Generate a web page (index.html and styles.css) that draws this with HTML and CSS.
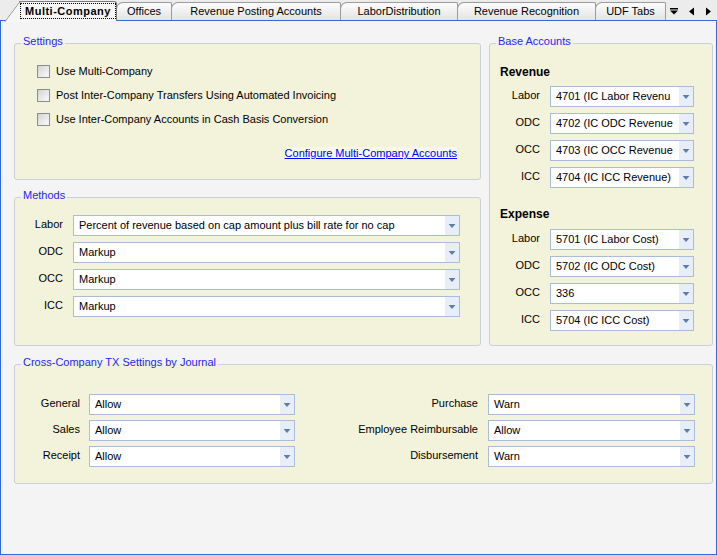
FILE: index.html
```html
<!DOCTYPE html>
<html>
<head>
<meta charset="utf-8">
<title>Multi-Company</title>
<link rel="stylesheet" href="styles.css">
</head>
<body>
<div class="window">
  <div class="tabstrip">
    <div class="tabs">
      <div class="tab active"><span class="focus">Multi-Company</span></div>
      <div class="tab t-offices">Offices</div>
      <div class="tab t-rpa">Revenue Posting Accounts</div>
      <div class="tab t-ld">LaborDistribution</div>
      <div class="tab t-rr">Revenue Recognition</div>
      <div class="tab t-udf">UDF Tabs</div>
    </div>
    <div class="tabnav">
      <svg class="navicons" width="46" height="20" viewBox="0 0 46 20">
        <rect x="2" y="8" width="8" height="1.5" fill="#000"/>
        <polygon points="2,10.5 10,10.5 6,14.5" fill="#000"/>
        <polygon points="26,7.5 26,15.5 21,11.5" fill="#000"/>
        <polygon points="38,7.5 38,15.5 43,11.5" fill="#000"/>
      </svg>
    </div>
  </div>

  <div class="panel">
    <div class="top">
      <div class="leftcol">
        <fieldset class="group settings">
          <legend>Settings</legend>
          <div class="inner">
            <label class="check"><span class="box"></span>Use Multi-Company</label>
            <label class="check"><span class="box"></span>Post Inter-Company Transfers Using Automated Invoicing</label>
            <label class="check"><span class="box"></span>Use Inter-Company Accounts in Cash Basis Conversion</label>
            <div class="linkrow"><a href="#">Configure Multi-Company Accounts</a></div>
          </div>
        </fieldset>

        <fieldset class="group methods">
          <legend>Methods</legend>
          <div class="inner">
            <div class="form methods-form">
              <span class="lbl">Labor</span>
              <div class="select"><span class="val">Percent of revenue based on cap amount plus bill rate for no cap</span><span class="btn"></span></div>
              <span class="lbl">ODC</span>
              <div class="select"><span class="val">Markup</span><span class="btn"></span></div>
              <span class="lbl">OCC</span>
              <div class="select"><span class="val">Markup</span><span class="btn"></span></div>
              <span class="lbl">ICC</span>
              <div class="select"><span class="val">Markup</span><span class="btn"></span></div>
            </div>
          </div>
        </fieldset>
      </div>

      <fieldset class="group base">
        <legend>Base Accounts</legend>
        <div class="inner">
          <div class="heading">Revenue</div>
          <div class="form base-form">
            <span class="lbl">Labor</span>
            <div class="select"><span class="val">4701 (IC Labor Revenu</span><span class="btn"></span></div>
            <span class="lbl">ODC</span>
            <div class="select"><span class="val">4702 (IC ODC Revenue</span><span class="btn"></span></div>
            <span class="lbl">OCC</span>
            <div class="select"><span class="val">4703 (IC OCC Revenue</span><span class="btn"></span></div>
            <span class="lbl">ICC</span>
            <div class="select"><span class="val">4704 (IC ICC Revenue)</span><span class="btn"></span></div>
          </div>
          <div class="heading expense">Expense</div>
          <div class="form base-form">
            <span class="lbl">Labor</span>
            <div class="select"><span class="val">5701 (IC Labor Cost)</span><span class="btn"></span></div>
            <span class="lbl">ODC</span>
            <div class="select"><span class="val">5702 (IC ODC Cost)</span><span class="btn"></span></div>
            <span class="lbl">OCC</span>
            <div class="select"><span class="val">336</span><span class="btn"></span></div>
            <span class="lbl">ICC</span>
            <div class="select"><span class="val">5704 (IC ICC Cost)</span><span class="btn"></span></div>
          </div>
        </div>
      </fieldset>
    </div>

    <fieldset class="group cross">
      <legend>Cross-Company TX Settings by Journal</legend>
      <div class="inner">
        <div class="form cross-form">
          <span class="lbl">General</span>
          <div class="select"><span class="val">Allow</span><span class="btn"></span></div>
          <span class="lbl lbl2">Purchase</span>
          <div class="select"><span class="val">Warn</span><span class="btn"></span></div>
          <span class="lbl">Sales</span>
          <div class="select"><span class="val">Allow</span><span class="btn"></span></div>
          <span class="lbl lbl2">Employee Reimbursable</span>
          <div class="select"><span class="val">Allow</span><span class="btn"></span></div>
          <span class="lbl">Receipt</span>
          <div class="select"><span class="val">Allow</span><span class="btn"></span></div>
          <span class="lbl lbl2">Disbursement</span>
          <div class="select"><span class="val">Warn</span><span class="btn"></span></div>
        </div>
      </div>
    </fieldset>
  </div>
</div>
</body>
</html>
```

FILE: styles.css
```css
* { box-sizing: border-box; }

html, body {
  margin: 0;
  padding: 0;
}

body {
  font-family: "Liberation Sans", Arial, sans-serif;
  font-size: 11px;
  color: #000;
  background: #f4f4f4;
}

.window {
  width: 717px;
  height: 555px;
  display: flex;
  flex-direction: column;
  background: #ececec;
  overflow: hidden;
}

/* ---------- Tabs ---------- */
.tabstrip {
  height: 20px;
  flex: none;
  display: flex;
  align-items: flex-end;
}

.tabs {
  display: flex;
  align-items: flex-end;
  height: 20px;
}

.tab {
  position: relative;
  height: 18px;
  line-height: 16px;
  margin-left: -1px;
  border: 1px solid #9b9b9b;
  border-bottom: none;
  border-radius: 7px 2px 0 0;
  background: linear-gradient(#fdfdfd, #e3e3e3);
  text-align: center;
  white-space: nowrap;
}

.t-offices { width: 56px; }
.t-rpa { width: 170px; }
.t-ld { width: 118px; }
.t-rr { width: 139px; }
.t-udf { width: 71px; }

.tab.active {
  z-index: 5;
  display: flex;
  width: 98px;
  height: 20px;
  margin-left: 19px;
  margin-bottom: -1px;
  padding: 1px 0 0 1px;
  border-color: #7a7a7a;
  border-left: none;
  border-radius: 0 3px 0 0;
  background: #f6f6f6;
  font-weight: bold;
  letter-spacing: 0.5px;
}

.tab.active::before {
  content: "";
  position: absolute;
  left: -15px;
  top: -1px;
  width: 24px;
  height: 20px;
  border-left: 1px solid #7a7a7a;
  border-top: 1px solid #7a7a7a;
  border-top-left-radius: 3px;
  background: #f6f6f6;
  transform-origin: 0 100%;
  transform: skewX(-37deg);
  z-index: -1;
}

.focus {
  flex: 1;
  height: 16px;
  line-height: 14px;
  border: 1px dotted #000;
  text-align: center;
}

.tabnav {
  flex: 1;
  height: 20px;
  display: flex;
  justify-content: flex-end;
  padding-right: 3px;
}

.navicons { display: block; }

/* ---------- Panel ---------- */
.panel {
  flex: 1;
  border: 1px solid #316ad3;
  background: #f4f4f4;
  padding: 14px 3px 0 13px;
}

.top {
  display: grid;
  grid-template-columns: 467px 224px;
  column-gap: 8px;
  align-items: stretch;
}

.leftcol {
  display: flex;
  flex-direction: column;
}

.group {
  margin: 0;
  padding: 0;
  min-width: 0;
  border: 1px solid #c8d1db;
  border-radius: 3px;
  background: #f3f3dc;
}

.group legend {
  margin-left: 6px;
  padding: 0 2px 4px;
  line-height: 13px;
  font-size: 11px;
  color: #2626f0;
}

/* Settings */
.settings .inner {
  padding: 7px 23px 19px 22px;
}

.check {
  display: flex;
  align-items: center;
  gap: 6px;
  height: 24px;
  white-space: nowrap;
}

.box {
  width: 13px;
  height: 13px;
  flex: none;
  border: 1px solid #8d8d8d;
  background: linear-gradient(135deg, #d2d2d2 0%, #ececec 60%, #f9f9f9 100%);
}

.linkrow {
  margin-top: 16px;
  line-height: 13px;
  text-align: right;
}

.linkrow a {
  color: #0000ff;
  text-decoration: underline;
  background: #f7f7ec;
}

/* Methods */
.methods {
  flex: 1;
  margin-top: 9px;
}

.methods .inner {
  padding: 9px 0 28px 0;
}

/* Forms */
.form {
  display: grid;
  row-gap: 6px;
  align-items: center;
}

.methods-form { grid-template-columns: 58px 387px; }
.base-form { grid-template-columns: 50px 144px; }
.cross-form {
  grid-template-columns: 74px 206px 193px 207px;
  row-gap: 5px;
}

.lbl {
  text-align: right;
  padding-right: 10px;
  padding-bottom: 3px;
  line-height: 13px;
  white-space: nowrap;
}

.cross-form .lbl { padding-right: 9px; }
.cross-form .lbl2 { padding-right: 10px; }

.select {
  display: flex;
  height: 21px;
  border: 1px solid #a9bcd9;
  background: #fff;
}

.val {
  flex: 1;
  min-width: 0;
  padding-left: 5px;
  line-height: 19px;
  white-space: nowrap;
  overflow: hidden;
}

.btn {
  width: 14px;
  flex: none;
  background: #e7eef8;
  display: flex;
  align-items: center;
  justify-content: center;
  padding-top: 1px;
}

.btn::after {
  content: "";
  width: 7px;
  height: 4px;
  background: #5c7db3;
  clip-path: polygon(0 0, 100% 0, 50% 100%);
}

/* Base accounts */
.base .inner {
  padding: 13px 0 14px 10px;
}

.heading {
  font-size: 12px;
  font-weight: bold;
  line-height: 15px;
  margin-bottom: 6px;
}

.heading.expense {
  margin-top: 19px;
  margin-bottom: 7px;
}

/* Cross company */
.cross {
  margin-top: 10px;
}

.cross .inner {
  padding: 21px 0 16px 0;
}
```
